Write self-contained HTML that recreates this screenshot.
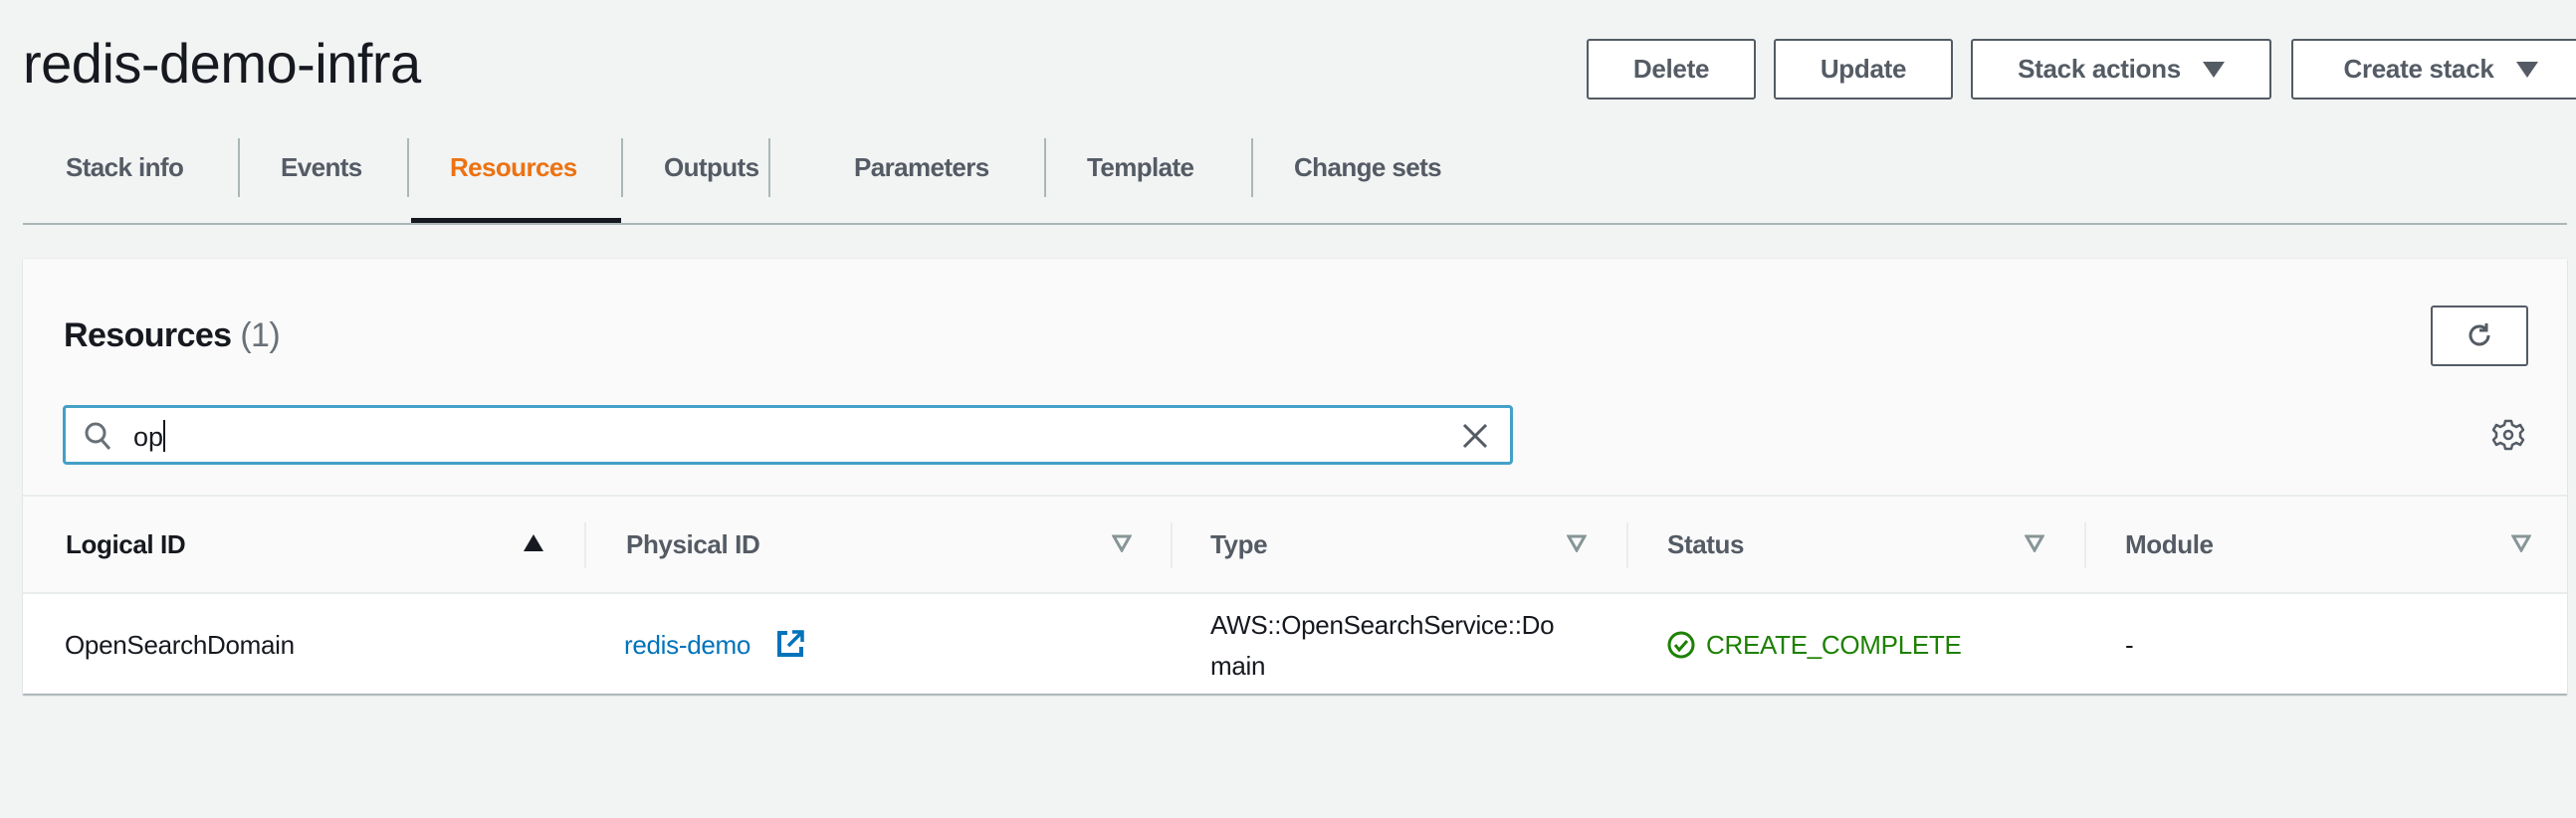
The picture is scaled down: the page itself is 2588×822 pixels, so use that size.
<!DOCTYPE html>
<html><head><meta charset="utf-8"><style>
*{margin:0;padding:0;box-sizing:border-box}
body{width:2588px;height:822px;background:#f2f3f3;font-family:"Liberation Sans",sans-serif;position:relative;overflow:hidden;color:#16191f}
.a{position:absolute;white-space:nowrap}
.title{left:23px;top:31px;font-size:56px;color:#16191f;letter-spacing:-0.5px}
.btn{position:absolute;top:39px;height:61px;border:2px solid #545b64;border-radius:3px;background:#fff;color:#545b64;font-weight:bold;font-size:26px;display:flex;align-items:center;justify-content:center;gap:22px;letter-spacing:-0.3px}
.tri{width:0;height:0;border-left:11px solid transparent;border-right:11px solid transparent;border-top:16px solid #545b64}
.tab{position:absolute;top:153px;font-size:26px;font-weight:bold;color:#545b64;letter-spacing:-0.6px}
.sep{position:absolute;top:139px;width:2px;height:59px;background:#aab7b8}
.panel{position:absolute;left:23px;top:259px;width:2556px;height:438px;background:#fafafa;border-top:1px solid #eaeded;box-shadow:0 2px 1px rgba(0,28,36,.3)}
.th{position:absolute;top:532px;font-size:26px;font-weight:bold;color:#545b64;letter-spacing:-0.4px}
.hs{position:absolute;top:525px;width:2px;height:46px;background:#eaeded}
.ft{position:absolute;top:537px;width:0;height:0}
.td{position:absolute;font-size:26px;color:#16191f;letter-spacing:-0.3px}
</style></head><body>
<div class="a title">redis-demo-infra</div>
<div class="btn" style="left:1594px;width:170px">Delete</div>
<div class="btn" style="left:1782px;width:180px">Update</div>
<div class="btn" style="left:1980px;width:302px">Stack actions <span class="tri"></span></div>
<div class="btn" style="left:2302px;width:300px">Create stack <span class="tri"></span></div>

<div class="tab" style="left:66px">Stack info</div>
<div class="sep" style="left:239px"></div>
<div class="tab" style="left:282px">Events</div>
<div class="sep" style="left:409px"></div>
<div class="tab" style="left:452px;color:#ec7211">Resources</div>
<div class="sep" style="left:624px"></div>
<div class="tab" style="left:667px">Outputs</div>
<div class="sep" style="left:772px"></div>
<div class="tab" style="left:858px">Parameters</div>
<div class="sep" style="left:1049px"></div>
<div class="tab" style="left:1092px">Template</div>
<div class="sep" style="left:1257px"></div>
<div class="tab" style="left:1300px">Change sets</div>
<div class="a" style="left:23px;top:224px;width:2556px;height:2px;background:#aab7b8"></div>
<div class="a" style="left:413px;top:219px;width:211px;height:5px;background:#16191f"></div>

<div class="panel"></div>
<div class="a" style="left:64px;top:318px;font-size:34px;font-weight:bold;letter-spacing:-0.6px">Resources <span style="font-weight:normal;color:#687078">(1)</span></div>
<div class="a" style="left:2442px;top:307px;width:98px;height:61px;border:2px solid #545b64;border-radius:3px;background:#fff"></div>
<svg class="a" style="left:2475px;top:321px" width="32" height="32" viewBox="0 0 32 32"><path d="M25 16a9 9 0 1 1-3-6.7" fill="none" stroke="#545b64" stroke-width="3"/><path d="M23 4v7h-7" fill="none" stroke="#545b64" stroke-width="3"/></svg>

<div class="a" style="left:63px;top:407px;width:1457px;height:60px;border:3px solid #44a0c7;border-radius:4px;background:#fff"></div>
<svg class="a" style="left:84px;top:423px" width="30" height="32" viewBox="0 0 30 32"><circle cx="12" cy="12" r="9" fill="none" stroke="#687078" stroke-width="3"/><path d="M18 19l8 9" stroke="#687078" stroke-width="3"/></svg>
<div class="a" style="left:134px;top:422px;font-size:27px">op<span style="display:inline-block;width:2px;height:32px;background:#16191f;vertical-align:-6px"></span></div>
<svg class="a" style="left:1468px;top:424px" width="28" height="28" viewBox="0 0 28 28"><path d="M3 3l22 22M25 3L3 25" stroke="#545b64" stroke-width="3"/></svg>
<svg class="a" style="left:2503px;top:420px" width="34" height="34" viewBox="0 0 34 34"><path d="M14 3h6l1 4 4 2 4-2 3 5-3 3v4l3 3-3 5-4-2-4 2-1 4h-6l-1-4-4-2-4 2-3-5 3-3v-4L2 12l3-5 4 2 4-2z" fill="none" stroke="#545b64" stroke-width="2.5" stroke-linejoin="round"/><circle cx="17" cy="17" r="4" fill="none" stroke="#545b64" stroke-width="2.5"/></svg>

<div class="a" style="left:23px;top:497px;width:2556px;height:2px;background:#eaeded"></div>
<div class="a" style="left:23px;top:595px;width:2556px;height:2px;background:#eaeded"></div>
<div class="a" style="left:23px;top:597px;width:2556px;height:99px;background:#fff"></div>

<div class="th" style="left:66px;color:#16191f">Logical ID</div>
<div class="ft" style="left:526px;border-left:10px solid transparent;border-right:10px solid transparent;border-bottom:17px solid #16191f"></div>
<div class="hs" style="left:587px"></div>
<div class="th" style="left:629px">Physical ID</div>
<svg class="a" style="left:1117px;top:537px" width="20" height="18"><path d="M2 2h16L10 16z" fill="none" stroke="#879596" stroke-width="3"/></svg>
<div class="hs" style="left:1176px"></div>
<div class="th" style="left:1216px">Type</div>
<svg class="a" style="left:1574px;top:537px" width="20" height="18"><path d="M2 2h16L10 16z" fill="none" stroke="#879596" stroke-width="3"/></svg>
<div class="hs" style="left:1634px"></div>
<div class="th" style="left:1675px">Status</div>
<svg class="a" style="left:2034px;top:537px" width="20" height="18"><path d="M2 2h16L10 16z" fill="none" stroke="#879596" stroke-width="3"/></svg>
<div class="hs" style="left:2094px"></div>
<div class="th" style="left:2135px">Module</div>
<svg class="a" style="left:2523px;top:537px" width="20" height="18"><path d="M2 2h16L10 16z" fill="none" stroke="#879596" stroke-width="3"/></svg>

<div class="td" style="left:65px;top:633px">OpenSearchDomain</div>
<div class="td" style="left:627px;top:633px;color:#0073bb">redis-demo</div>
<svg class="a" style="left:779px;top:632px" width="30" height="30" viewBox="0 0 30 30"><path d="M12 4H4v22h22v-8" fill="none" stroke="#0073bb" stroke-width="4"/><path d="M17 3h10v10M27 3L13 17" fill="none" stroke="#0073bb" stroke-width="3.5"/></svg>
<div class="td" style="left:1216px;top:613px">AWS::OpenSearchService::Do</div>
<div class="td" style="left:1216px;top:654px">main</div>
<svg class="a" style="left:1674px;top:632px" width="30" height="32" viewBox="0 0 30 32"><circle cx="15" cy="16" r="12" fill="none" stroke="#1d8102" stroke-width="3"/><path d="M9 16l4 5 8-9" fill="none" stroke="#1d8102" stroke-width="3"/></svg>
<div class="td" style="left:1714px;top:633px;color:#1d8102">CREATE_COMPLETE</div>
<div class="td" style="left:2135px;top:633px">-</div>
</body></html>
